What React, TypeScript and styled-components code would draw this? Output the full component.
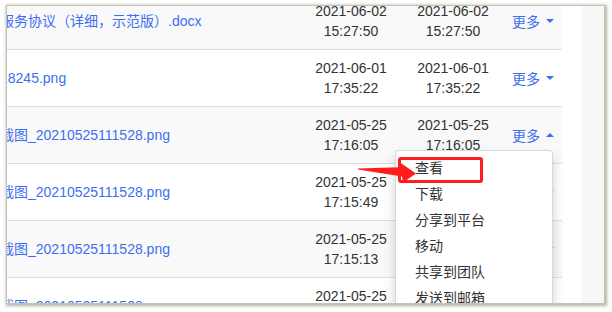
import React from "react";
import styled, { createGlobalStyle } from "styled-components";

const Global = createGlobalStyle`
  html, body { margin: 0; padding: 0; background: #ffffff; }
  body { font-family: "Liberation Sans", "Noto Sans CJK SC", sans-serif; font-size: 14px; }
`;

const Page = styled.div`
  padding: 5px 0 0 6px;
  width: 612px;
  height: 312px;
  box-sizing: border-box;
`;

const Frame = styled.div`
  position: relative;
  width: 599px;
  height: 299px;
  box-sizing: border-box;
  border: 1px solid #c2c2b2;
  box-shadow: 1px 1px 3px 1px rgba(120, 120, 90, 0.55);
  overflow: hidden;
  display: flex;
  background: #fff;
`;

const TableArea = styled.div`
  width: 555px;
  flex: none;
  overflow: hidden;
`;

const Table = styled.div`
  margin-top: -13px;
`;

const Gap = styled.div`
  width: 20px;
  flex: none;
  background: #fff;
`;

const Track = styled.div`
  flex: 1;
  background: #f7f7f7;
`;

const Row = styled.div<{ $striped: boolean }>`
  display: grid;
  grid-template-columns: 293px 102px 102px 58px;
  height: 56px;
  border-bottom: 1px solid #dddddd;
  background: ${(p) => (p.$striped ? "#f9f9f9" : "#ffffff")};
`;

const NameCell = styled.div`
  display: flex;
  align-items: center;
  white-space: nowrap;
  min-width: 0;
`;

const FileLink = styled.span`
  margin-left: -7px;
  color: #3d6ef2;
  line-height: 20px;
`;

const DateCell = styled.div`
  display: flex;
  flex-direction: column;
  align-items: center;
  justify-content: center;
  color: #333333;
  line-height: 20px;
  white-space: nowrap;
`;

const MoreCell = styled.div`
  display: flex;
  align-items: center;
  padding-left: 8px;
  color: #3d6ef2;
  white-space: nowrap;
`;

const Caret = styled.span<{ $up: boolean }>`
  display: inline-block;
  width: 0;
  height: 0;
  margin-left: 6px;
  border-left: 4px solid transparent;
  border-right: 4px solid transparent;
  ${(p) => (p.$up ? "border-bottom: 4px solid #3d6ef2;" : "border-top: 4px solid #3d6ef2;")}
`;

const Menu = styled.ul`
  position: absolute;
  left: 388px;
  top: 144px;
  width: 158px;
  box-sizing: border-box;
  margin: 0;
  padding: 4px 0;
  list-style: none;
  background: #fff;
  border: 1px solid rgba(0, 0, 0, 0.15);
  border-radius: 4px;
  box-shadow: 0 6px 12px rgba(0, 0, 0, 0.175);
`;

const MenuItem = styled.li`
  padding: 3px 19px;
  line-height: 20px;
  color: #333333;
  white-space: nowrap;
`;

const Highlight = styled.div`
  position: absolute;
  left: 391px;
  top: 151px;
  width: 85px;
  height: 26px;
  box-sizing: border-box;
  border: 3px solid #ff1c1c;
  border-radius: 3px;
`;

const ArrowSvg = styled.svg`
  position: absolute;
  left: 343px;
  top: 149px;
`;

const rows = [
  { name: "服务协议（详细，示范版）.docx", c: ["2021-06-02", "15:27:50"], u: ["2021-06-02", "15:27:50"], open: false },
  { name: "18245.png", c: ["2021-06-01", "17:35:22"], u: ["2021-06-01", "17:35:22"], open: false },
  { name: "截图_20210525111528.png", c: ["2021-05-25", "17:16:05"], u: ["2021-05-25", "17:16:05"], open: true },
  { name: "截图_20210525111528.png", c: ["2021-05-25", "17:15:49"], u: ["2021-05-25", "17:15:49"], open: false },
  { name: "截图_20210525111528.png", c: ["2021-05-25", "17:15:13"], u: ["2021-05-25", "17:15:13"], open: false },
  { name: "截图_20210525111528.png", c: ["2021-05-25", "17:14:50"], u: ["2021-05-25", "17:14:50"], open: false },
];

const menuItems = ["查看", "下载", "分享到平台", "移动", "共享到团队", "发送到邮箱", "删除"];

export default function App() {
  return (
    <>
      <Global />
      <Page>
        <Frame>
          <TableArea>
            <Table>
              {rows.map((r, i) => (
                <Row key={i} $striped={i % 2 === 0}>
                  <NameCell>
                    <FileLink>{r.name}</FileLink>
                  </NameCell>
                  <DateCell>
                    <span>{r.c[0]}</span>
                    <span>{r.c[1]}</span>
                  </DateCell>
                  <DateCell>
                    <span>{r.u[0]}</span>
                    <span>{r.u[1]}</span>
                  </DateCell>
                  <MoreCell>
                    更多
                    <Caret $up={r.open} />
                  </MoreCell>
                </Row>
              ))}
            </Table>
          </TableArea>
          <Gap />
          <Track />
          <Menu>
            {menuItems.map((m) => (
              <MenuItem key={m}>{m}</MenuItem>
            ))}
          </Menu>
          <Highlight />
          <ArrowSvg width="72" height="34" viewBox="0 0 72 34">
            <polygon
              points="8,13.4 51,12.2 50,7.5 66,18.5 53,27.5 52,21.5 8,14.6"
              fill="#ff1c1c"
            />
          </ArrowSvg>
        </Frame>
      </Page>
    </>
  );
}
